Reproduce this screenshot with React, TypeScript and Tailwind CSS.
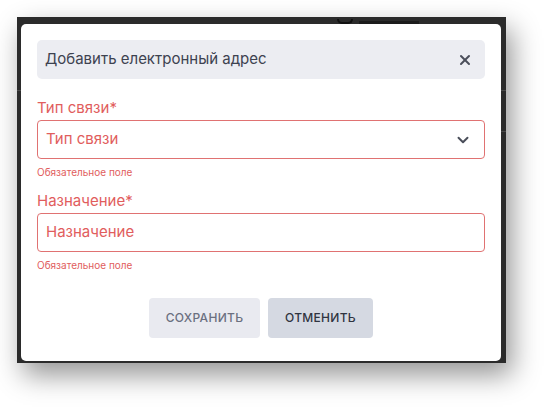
import { X, ChevronDown } from 'lucide-react';

const RED = 'text-[#e15d5d]';

function Field({ label, placeholder, select }: { label: string; placeholder: string; select?: boolean }) {
  return (
    <div>
      <div className={`text-[15px] leading-5 mb-[2px] ${RED}`}>{label}*</div>
      <div className="h-[39px] rounded-[4px] border border-[#e07272] flex items-center justify-between pl-2 pr-[12px]">
        <span className={`text-[15px] ${RED}`}>{placeholder}</span>
        {select && <ChevronDown className="w-[18px] h-[18px] text-[#4a4e5a]" strokeWidth={2.6} />}
      </div>
      <div className={`mt-[6px] text-[10px] leading-[14px] ${RED}`}>Обязательное поле</div>
    </div>
  );
}

export default function App() {
  return (
    <div className="w-[554px] h-[412px] bg-white pt-[17px] pl-[17px]" style={{ fontFamily: 'Inter, "Noto Sans", sans-serif' }}>
      {/* затемнённая подложка страницы */}
      <div className="relative w-[489px] h-[346px] bg-[#2b2b2b] pt-[7px] pl-[4px] pr-[5px] pb-[2px] shadow-[6px_12px_26px_rgba(0,0,0,0.42)]">
        <div className="absolute left-0 top-[73px] w-[4px] h-px bg-[#4a4a4a]" />
        <div className="absolute right-0 top-[73px] w-[5px] h-px bg-[#4a4a4a]" />
        <div className="absolute right-0 top-[114px] w-[5px] h-px bg-[#4a4a4a]" />
        <div className="absolute left-[320px] top-0 h-[7px] flex items-end gap-[6px] overflow-hidden">
          <div className="w-[16px] h-[5px] rounded-b-full border-b-2 border-x-2 border-[#111]" />
          <div className="w-[60px] h-[3px] bg-[#1c1c1c]" />
        </div>

        <div className="bg-white h-full rounded-[5px] px-4 pt-4 pb-[23px]">
          <div className="h-[39px] rounded-[5px] bg-[#ecedf2] flex items-center justify-between pl-[8px] pr-[12px]">
            <span className="text-[15px] text-[#3d4250]">Добавить електронный адрес</span>
            <X className="w-[16px] h-[16px] text-[#4a4e5a]" strokeWidth={3} />
          </div>

          <div className="mt-[19px]">
            <Field label="Тип связи" placeholder="Тип связи" select />
          </div>
          <div className="mt-[12px]">
            <Field label="Назначение" placeholder="Назначение" />
          </div>

          <div className="mt-[26px] flex justify-center gap-2">
            <button className="w-[111px] h-[40px] rounded-[4px] bg-[#e9eaf0] text-[12px] font-medium tracking-[0.3px] uppercase text-[#6b7080]">
              Сохранить
            </button>
            <button className="w-[105px] h-[40px] rounded-[4px] bg-[#d5d9e2] text-[12px] font-medium tracking-[0.3px] uppercase text-[#2f3440]">
              Отменить
            </button>
          </div>
        </div>
      </div>
    </div>
  );
}
